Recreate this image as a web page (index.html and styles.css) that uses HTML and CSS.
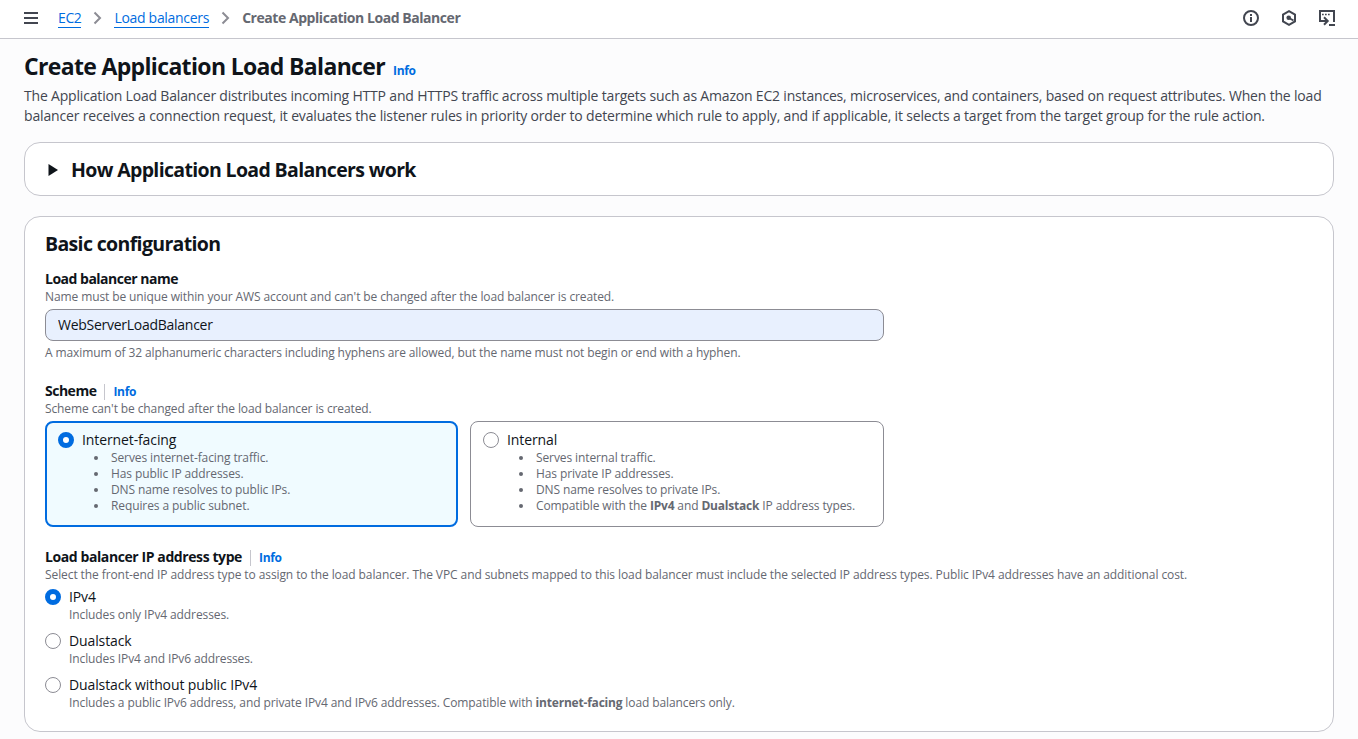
FILE: index.html
```html
<!DOCTYPE html>
<html lang="en">
<head>
<meta charset="utf-8">
<title>Create Application Load Balancer</title>
<link rel="stylesheet" href="styles.css">
</head>
<body>
<header class="topbar">
  <svg class="menu" width="16" height="16" viewBox="0 0 16 16"><path d="M1 3h14M1 8h14M1 13h14"/></svg>
  <nav class="crumbs">
    <a class="crumb ec2" href="#">EC2</a>
    <svg class="chevron" width="10" height="16" viewBox="0 0 10 16"><path d="M1.500 2.500 7 8l-5.500 5.500"/></svg>
    <a class="crumb" href="#">Load balancers</a>
    <svg class="chevron" width="10" height="16" viewBox="0 0 10 16"><path d="M1.500 2.500 7 8l-5.500 5.500"/></svg>
    <span class="current">Create Application Load Balancer</span>
  </nav>
  <div class="tools">
    <svg width="16" height="16" viewBox="0 0 16 16"><circle cx="8" cy="8" r="7"/><path d="M8 7v5M8 4v2"/></svg>
    <svg width="16" height="16" viewBox="0 0 16 16"><path d="M8 1.200l6 3.300v7l-6 3.300-6-3.300v-7z"/><circle class="dot" cx="7.700" cy="7.700" r="2.300"/><path d="M8 8l4.500 2.500"/></svg>
    <svg class="shell" width="18" height="16" viewBox="0 0 18 16"><path d="M9.500 11H2V1h14v11M6 7.300l3.700 3.700L6 14.700M11 15h6"/><path class="dots" d="M4 4.500h1.700M7 4.500h1.700M10 4.500h1.700"/></svg>
  </div>
</header>
<main class="page">
  <div class="title-row"><h1>Create Application Load Balancer</h1><a class="info" href="#">Info</a></div>
  <p class="intro"><span class="line">The Application Load Balancer distributes incoming HTTP and HTTPS traffic across multiple targets such as Amazon EC2 instances, microservices, and containers, based on request attributes. When the load</span> <span class="line second">balancer receives a connection request, it evaluates the listener rules in priority order to determine which rule to apply, and if applicable, it selects a target from the target group for the rule action.</span></p>
  <section class="card expand">
    <svg class="caret" width="10" height="12" viewBox="0 0 10 12"><path d="M.5 0v12L10 6z"/></svg>
    <h2>How Application Load Balancers work</h2>
  </section>
  <section class="card config">
    <h2>Basic configuration</h2>
    <div class="field name-field">
      <div class="label-row"><label class="label" for="name">Load balancer name</label></div>
      <div class="hint">Name must be unique within your AWS account and can't be changed after the load balancer is created.</div>
      <input class="input" id="name" type="text" value="WebServerLoadBalancer">
      <div class="hint">A maximum of 32 alphanumeric characters including hyphens are allowed, but the name must not begin or end with a hyphen.</div>
    </div>
    <div class="field">
      <div class="label-row"><span class="label">Scheme</span><a class="info divided" href="#">Info</a></div>
      <div class="hint">Scheme can't be changed after the load balancer is created.</div>
      <div class="tiles">
        <div class="tile selected">
          <div class="option"><span class="radio checked"></span><span class="text">Internet-facing</span></div>
          <ul class="hint bullets">
            <li>Serves internet-facing traffic.</li>
            <li>Has public IP addresses.</li>
            <li>DNS name resolves to public IPs.</li>
            <li>Requires a public subnet.</li>
          </ul>
        </div>
        <div class="tile">
          <div class="option"><span class="radio"></span><span class="text">Internal</span></div>
          <ul class="hint bullets">
            <li>Serves internal traffic.</li>
            <li>Has private IP addresses.</li>
            <li>DNS name resolves to private IPs.</li>
            <li>Compatible with the <b>IPv4</b> and <b>Dualstack</b> IP address types.</li>
          </ul>
        </div>
      </div>
    </div>
    <div class="field">
      <div class="label-row"><span class="label wide">Load balancer IP address type</span><a class="info divided" href="#">Info</a></div>
      <div class="hint long">Select the front-end IP address type to assign to the load balancer. The VPC and subnets mapped to this load balancer must include the selected IP address types. Public IPv4 addresses have an additional cost.</div>
      <div class="choices">
        <div><div class="option"><span class="radio checked"></span><span class="text">IPv4</span></div><div class="hint sub">Includes only IPv4 addresses.</div></div>
        <div><div class="option"><span class="radio"></span><span class="text">Dualstack</span></div><div class="hint sub">Includes IPv4 and IPv6 addresses.</div></div>
        <div><div class="option"><span class="radio"></span><span class="text">Dualstack without public IPv4</span></div><div class="hint sub">Includes a public IPv6 address, and private IPv4 and IPv6 addresses. Compatible with <b>internet-facing</b> load balancers only.</div></div>
      </div>
    </div>
  </section>
</main>
</body>
</html>
```
FILE: styles.css
```css
* { box-sizing: border-box; }
body {
  margin: 0;
  height: 739px;
  overflow: hidden;
  background: #fcfcfd;
  color: #0f141a;
  font: 14px/20px "Open Sans", "Noto Sans", sans-serif;
  letter-spacing: -0.18px;
  white-space: nowrap;
}
a { color: #006ce0; text-decoration: none; }
h1, h2, p, ul { margin: 0; }
svg { display: block; flex: none; fill: none; stroke: #424650; stroke-width: 2; }

.topbar {
  display: flex;
  align-items: center;
  height: 39px;
  padding: 0 22px 2px 23px;
  border-bottom: 1px solid #c6c6cd;
  background: #fff;
}
.crumbs { display: flex; align-items: center; margin-left: 19px; letter-spacing: -0.3px; }
.crumb { height: 20px; border-bottom: 1px solid #006ce0; }
.ec2 { letter-spacing: -0.4px; }
.chevron { margin: 0 11px 0 12px; stroke: #8c8c94; }
.current { color: #656871; font-weight: 700; letter-spacing: -0.45px; }
.tools { display: flex; gap: 22px; margin-left: auto; }
.tools .shell { margin-left: -1px; }
.dot { fill: #424650; stroke: none; }
.dots { stroke-width: 1.7; }

.page { padding: 12px 24px 0; }
.title-row { display: flex; align-items: baseline; gap: 8px; height: 35px; }
h1 { font-size: 23px; line-height: 30px; font-weight: 700; letter-spacing: -0.66px; }
.info { font-size: 12px; line-height: 16px; font-weight: 700; letter-spacing: -0.3px; }
.intro { color: #424650; }
.line { display: block; letter-spacing: -0.183px; }
.second { letter-spacing: -0.163px; }

.card {
  border: 1px solid #c6c6cd;
  border-radius: 16px;
  background: #fff;
}
h2 { font-size: 19.5px; line-height: 24px; font-weight: 700; letter-spacing: -0.65px; }
.expand { display: flex; align-items: center; height: 54px; margin-top: 16px; padding: 2px 23px 0; }
.expand h2 { margin-left: 13px; }
.caret { fill: #0f141a; stroke: none; }
.config { height: 516px; margin-top: 20px; padding: 15px 20px; }
.field { margin-top: 20px; }
.name-field { margin-top: 13px; }
.label-row { display: flex; align-items: center; height: 20px; }
.label { font-weight: 700; letter-spacing: -0.5px; }
.wide { letter-spacing: -0.41px; }
.divided { margin-left: 8px; padding-left: 8px; border-left: 1px solid #c6c6cd; position: relative; top: 1px; }
.hint { color: #656871; font-size: 12px; line-height: 16px; letter-spacing: -0.105px; }
.hint.long { letter-spacing: -0.09px; }
.hint b { letter-spacing: -0.2px; }
.input {
  display: block;
  width: 839px;
  height: 32px;
  margin: 4px 0;
  padding: 0 12px 1px;
  border: 1px solid #8c8c94;
  border-radius: 8px;
  outline: none;
  background: #e8f0fe;
  color: #0f141a;
  font: inherit;
  letter-spacing: -0.27px;
}
.tiles { display: grid; grid-template-columns: 413px 414px; gap: 12px; width: 839px; margin: 4px 0; }
.tile { height: 106px; padding: 8px 12px; border: 1px solid #8c8c94; border-radius: 8px; }
.tile.selected { padding: 7px 11px; border: 2px solid #006ce0; background: #f0fbff; }
.option { display: flex; align-items: center; gap: 8px; height: 20px; }
.radio { width: 16px; height: 16px; border: 1px solid #8c8c94; border-radius: 50%; background: #fff; }
.radio.checked { border: 5px solid #006ce0; }
.text { letter-spacing: -0.11px; }
.bullets { padding-left: 53px; list-style: none; }
.bullets li::before {
  content: "";
  display: inline-block;
  width: 4px;
  height: 4px;
  margin: 0 13px 2px -17px;
  border-radius: 50%;
  background: #656871;
}
.choices { display: grid; gap: 8px; margin-top: 4px; }
.sub { padding-left: 24px; }
```
